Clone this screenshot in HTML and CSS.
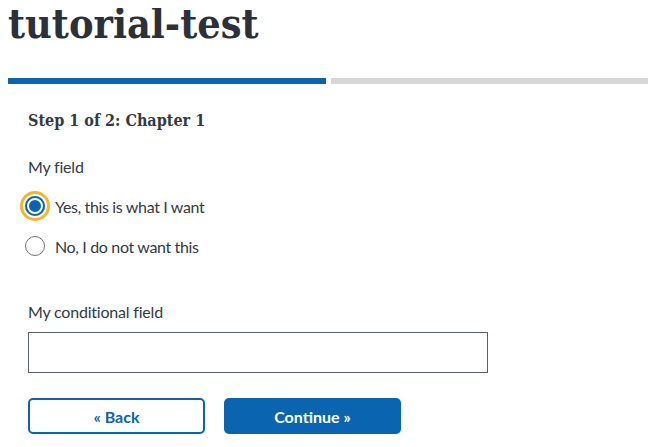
FILE: index.html
```html
<!DOCTYPE html>
<html lang="en">
<head>
<meta charset="utf-8">
<title>tutorial-test</title>
<link rel="stylesheet" href="styles.css">
</head>
<body>
<h1 class="title">tutorial-test</h1>
<div class="progress">
  <div class="seg seg-done"></div>
  <div class="seg"></div>
</div>
<form class="form">
  <h2 class="step">Step 1 of 2: Chapter 1</h2>
  <fieldset class="field">
    <legend class="label">My field</legend>
    <label class="radio-row">
      <span class="radio radio-checked"></span>
      <span class="radio-text">Yes, this is what I want</span>
    </label>
    <label class="radio-row">
      <span class="radio"></span>
      <span class="radio-text">No, I do not want this</span>
    </label>
  </fieldset>
  <div class="cond">
    <label class="label" for="cf">My conditional field</label>
    <input class="text-input" id="cf" type="text">
  </div>
  <div class="actions">
    <button type="button" class="btn btn-outline">« Back</button>
    <button type="button" class="btn btn-primary">Continue »</button>
  </div>
</form>
</body>
</html>
```
FILE: styles.css
```css
* { box-sizing: border-box; }
body {
  margin: 8px;
  background: #fff;
  color: #323a45;
  font-family: "Lato", "Open Sans", sans-serif;
}
.title {
  margin: 0;
  font-family: "DejaVu Serif", serif;
  font-stretch: condensed;
  font-weight: bold;
  font-size: 41px;
  line-height: 32px;
  color: #2b303a;
}
.progress {
  display: flex;
  gap: 5px;
  width: 640px;
  margin-top: 38px;
}
.seg {
  flex: 1;
  height: 6px;
  background: #d6d7d9;
}
.seg-done { background: #0a64b0; }
.form {
  padding: 0 20px;
}
.step {
  margin: 26px 0 0;
  font-family: "DejaVu Serif", serif;
  font-stretch: condensed;
  font-weight: bold;
  font-size: 16px;
  line-height: 22px;
  color: #323a45;
}
.field {
  border: 0;
  margin: 24px 0 0;
  padding: 0;
}
.label {
  display: block;
  padding: 0;
  font-size: 16px;
  line-height: 22px;
  letter-spacing: -0.2px;
  color: #323a45;
}
.radio-row {
  display: flex;
  align-items: center;
  height: 40px;
  margin-left: -3px;
}
.field .label { margin-bottom: 8px; }
.radio {
  width: 20px;
  height: 20px;
  border-radius: 50%;
  border: 1px solid #71767a;
  margin: 0 10px 0 0;
  flex: none;
  background: #fff;
}
.radio-checked {
  border: 0;
  background: #0a64b0;
  box-shadow: inset 0 0 0 2px #0a64b0, inset 0 0 0 4px #fff, 0 0 0 2px #fff, 0 0 0 5px #f7b52d;
}
.radio-text {
  font-size: 16px;
  letter-spacing: -0.35px;
  color: #323a45;
}
.cond {
  margin-top: 35px;
}
.text-input {
  display: block;
  width: 460px;
  height: 41px;
  margin: 9px 0 0 0;
  border: 1px solid #5b616b;
  border-radius: 0;
  font: inherit;
}
.actions {
  display: flex;
  gap: 19px;
  margin-top: 25px;
}
.btn {
  width: 177px;
  height: 36px;
  border-radius: 5px;
  font-family: inherit;
  font-weight: bold;
  font-size: 16px;
  cursor: pointer;
}
.btn-outline {
  background: #fff;
  border: 2px solid #0a64b0;
  color: #0a64b0;
}
.btn-primary {
  background: #0a64b0;
  border: 0;
  color: #fff;
}
```
